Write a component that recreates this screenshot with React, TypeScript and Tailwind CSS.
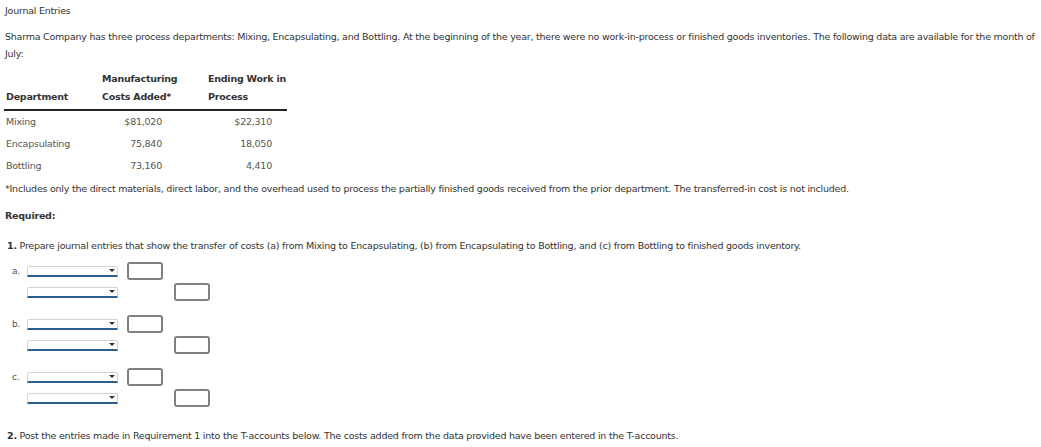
import React from 'react';

const rows = [
  { dept: 'Mixing', added: '$81,020', ending: '$22,310' },
  { dept: 'Encapsulating', added: '75,840', ending: '18,050' },
  { dept: 'Bottling', added: '73,160', ending: '4,410' },
];

function Select() {
  return (
    <div className="relative w-[91px] h-[11px] bg-white border border-[#d4d4d4] border-b-2 border-b-[#2a5f8f] rounded-t-[2px]">
      <span className="absolute right-[2px] top-[2px] w-0 h-0 border-l-[3px] border-r-[3px] border-t-[3px] border-l-transparent border-r-transparent border-t-[#333]" />
    </div>
  );
}

function Box() {
  return <div className="w-[36px] h-[18px] border-2 border-[#808080] rounded-[3px] bg-white" />;
}

function Entry({ label }: { label: string }) {
  return (
    <div className="flex flex-col gap-[3px]">
      <div className="flex items-center h-[18px]">
        <span className="w-[27px] pl-[12px] text-[9px] leading-[12px] text-[#555]">{label}</span>
        <Select />
        <div className="ml-[9px]"><Box /></div>
      </div>
      <div className="flex items-center h-[18px]">
        <span className="w-[27px]" />
        <Select />
        <div className="ml-[56px]"><Box /></div>
      </div>
    </div>
  );
}

export default function App() {
  return (
    <div className="w-[1041px] h-[447px] bg-white text-[#333] text-[9.5px] tracking-[-0.23px] leading-[17px] font-['DejaVu_Sans',Verdana,sans-serif] overflow-hidden">
      <div className="pl-[5px] pt-[2px]">
        <p>Journal Entries</p>
        <p className="mt-[9px]">
          <span className="whitespace-nowrap">Sharma Company has three process departments: Mixing, Encapsulating, and Bottling. At the beginning of the year, there were no work-in-process or finished goods inventories. The following data are available for the month of</span>
          <br />
          July:
        </p>
      </div>

      <table className="ml-[4px] mt-[8px] border-collapse">
        <thead>
          <tr className="border-b-2 border-[#222] align-bottom">
            <th className="text-left w-[98px] pl-[2px] pb-[3px] font-bold leading-[18px]">Department</th>
            <th className="text-left w-[106px] pb-[3px] font-bold whitespace-nowrap">
              <div className="leading-[18px]">Manufacturing</div>
              <div className="leading-[18px]">Costs Added*</div>
            </th>
            <th className="text-left w-[79px] pb-[3px] font-bold whitespace-nowrap">
              <div className="leading-[18px]">Ending Work in</div>
              <div className="leading-[18px]">Process</div>
            </th>
          </tr>
        </thead>
        <tbody className="text-[#555]">
          {rows.map((r) => (
            <tr key={r.dept} className="h-[22px]">
              <td className="pl-[2px] p-0">{r.dept}</td>
              <td className="text-right pr-[46px]">{r.added}</td>
              <td className="text-right pr-[15px]">{r.ending}</td>
            </tr>
          ))}
        </tbody>
      </table>

      <div className="pl-[5px]">
        <p className="mt-[4px]">*Includes only the direct materials, direct labor, and the overhead used to process the partially finished goods received from the prior department. The transferred-in cost is not included.</p>
        <p className="mt-[10px] font-bold">Required:</p>
        <p className="mt-[13px] pl-[2px]"><span className="font-bold">1.</span> Prepare journal entries that show the transfer of costs (a) from Mixing to Encapsulating, (b) from Encapsulating to Bottling, and (c) from Bottling to finished goods inventory.</p>
      </div>

      <div className="mt-[8px] flex flex-col gap-[14px]">
        <Entry label="a." />
        <Entry label="b." />
        <Entry label="c." />
      </div>

      <p className="pl-[7px] mt-[20px]"><span className="font-bold">2.</span> Post the entries made in Requirement 1 into the T-accounts below. The costs added from the data provided have been entered in the T-accounts.</p>
    </div>
  );
}
